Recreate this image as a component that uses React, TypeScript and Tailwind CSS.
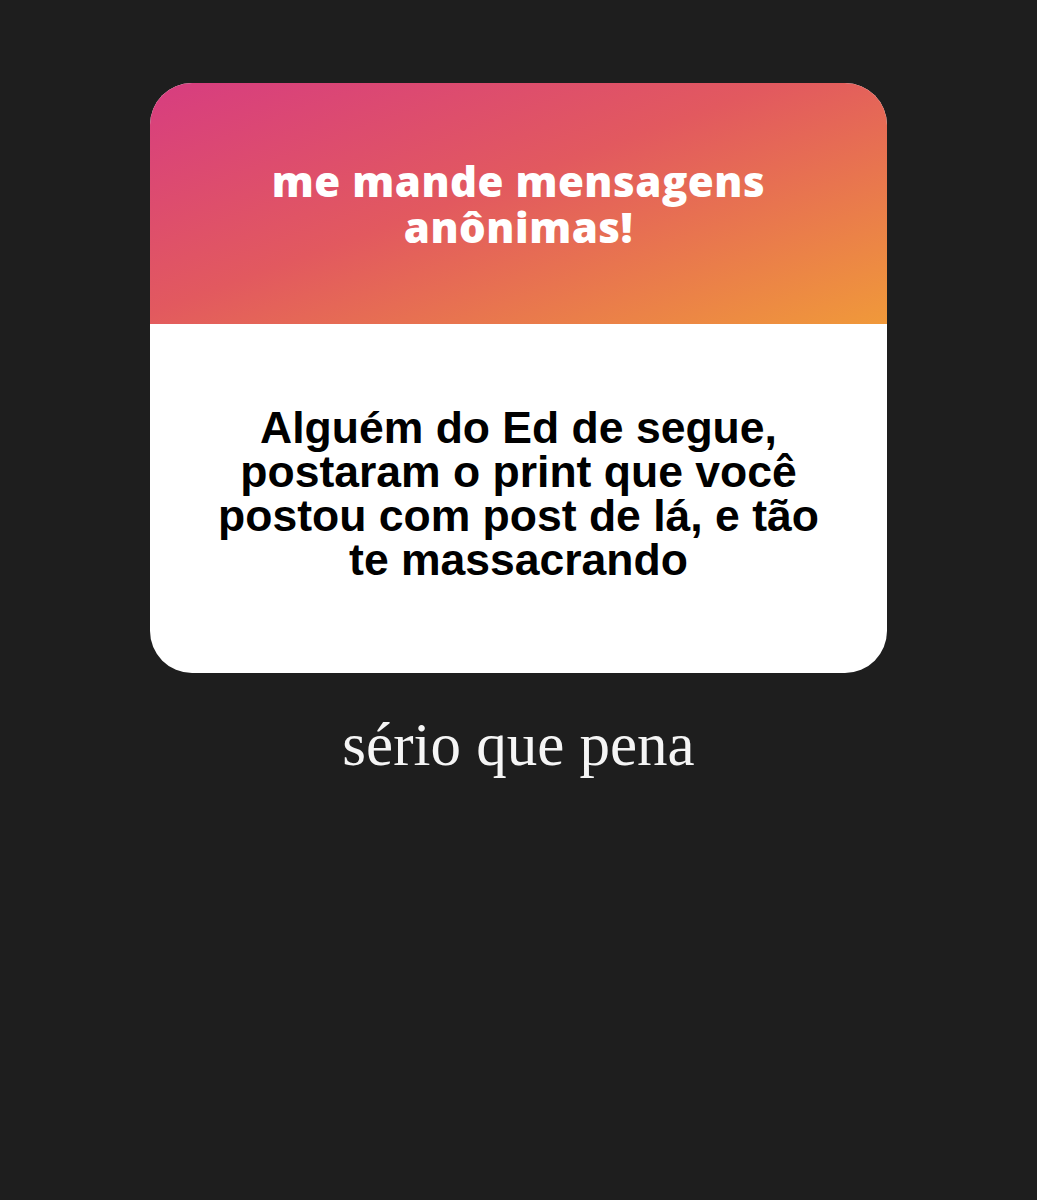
export default function App() {
  return (
    <div className="w-[1037px] h-[1200px] bg-[#1e1e1e] flex flex-col items-center">
      <div className="mt-[83px] w-[737px] h-[590px] rounded-[42px] overflow-hidden bg-white flex flex-col">
        <div className="h-[241px] bg-[linear-gradient(160deg,#d73d80_0%,#e2595f_45%,#f0993a_100%)] flex items-center justify-center">
          <p className="text-white text-center text-[42px] leading-[46px] font-extrabold tracking-[0.5px] font-['Open_Sans',sans-serif]">
            me mande mensagens
            <br />
            anônimas!
          </p>
        </div>
        <div className="flex-1 flex items-center justify-center pb-[10px]">
          <p className="text-black text-center text-[44.5px] leading-[44px] font-bold font-['Liberation_Sans',Arial,sans-serif]">
            Alguém do Ed de segue,
            <br />
            postaram o print que você
            <br />
            postou com post de lá, e tão
            <br />
            te massacrando
          </p>
        </div>
      </div>
      <p className="mt-[38px] text-[#f5f5f5] text-[61px] leading-[68px] font-['Liberation_Serif',serif]">
        sério que pena
      </p>
    </div>
  );
}
